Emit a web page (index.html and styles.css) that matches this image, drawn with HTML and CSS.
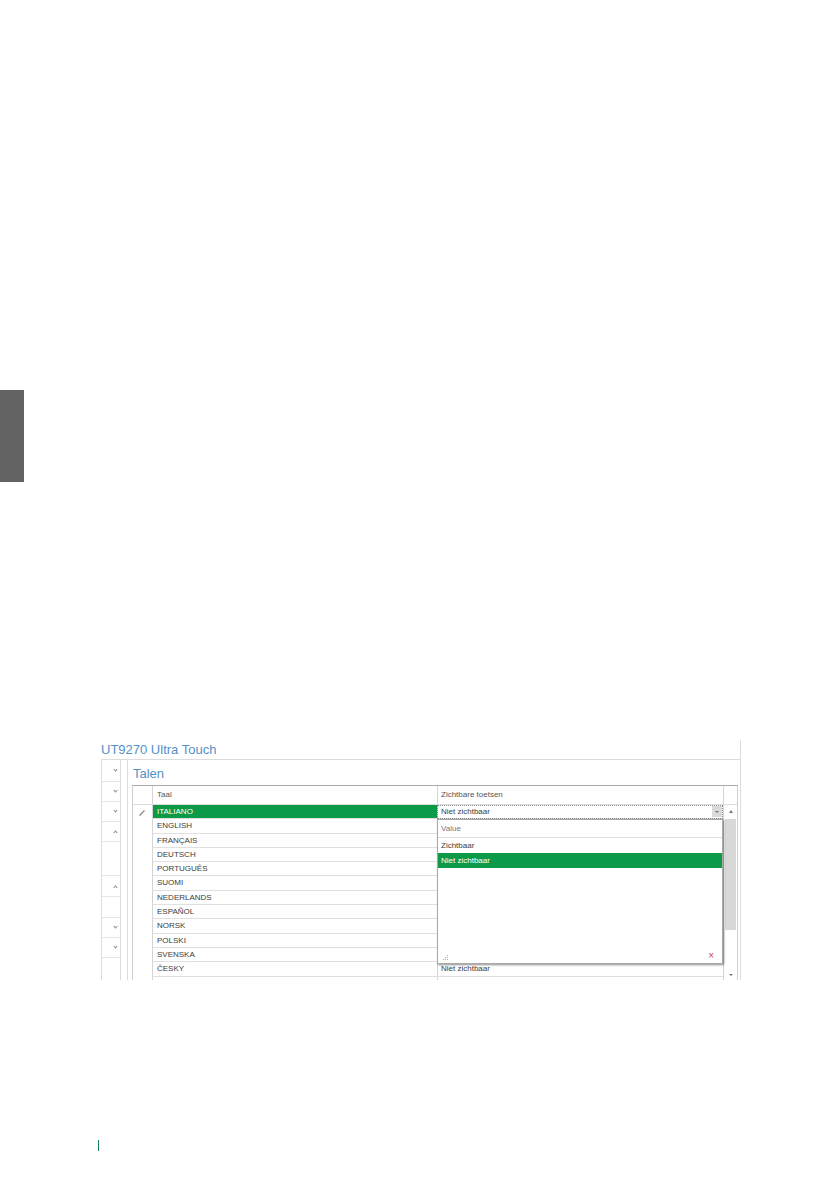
FILE: index.html
```html
<!DOCTYPE html>
<html>
<head>
    <title>UT9270 Ultra Touch - Talen</title>
    <link rel="stylesheet" href="styles.css">
</head>
<body>
<div class="page">
    <div class="side-tab"></div>

    <div class="shot">
        <div class="shot-title">UT9270 Ultra Touch</div>
        <div class="shot-body">
            <div class="nav">
                <div class="nav-item h22"><span class="chev down"></span></div>
                <div class="nav-item h20"><span class="chev down"></span></div>
                <div class="nav-item h20"><span class="chev down"></span></div>
                <div class="nav-item h20"><span class="chev up"></span></div>
                <div class="nav-item h34"></div>
                <div class="nav-item h21"><span class="chev up"></span></div>
                <div class="nav-item h21"></div>
                <div class="nav-item h20"><span class="chev down"></span></div>
                <div class="nav-item h20"><span class="chev down"></span></div>
            </div>
            <div class="nav-gap"></div>

            <div class="panel">
                <div class="panel-title">Talen</div>
                <div class="grid">
                    <div class="grid-head">
                        <div class="c-ind"></div>
                        <div class="c-name">Taal</div>
                        <div class="c-val">Zichtbare toetsen</div>
                        <div class="c-scroll"></div>
                    </div>
                    <div class="grid-main">
                        <div class="rows">
                            <div class="row">
                                <div class="c-ind">
                                    <svg width="7" height="7" viewBox="0 0 7 7"><path d="M1 6 L5.5 1.5" stroke="#8a8a8a" stroke-width="1.2"/><path d="M0.6 6.4 L1.6 6" stroke="#555" stroke-width="1"/></svg>
                                </div>
                                <div class="c-name sel">ITALIANO</div>
                                <div class="c-val editing">
                                    <span>Niet zichtbaar</span>
                                    <span class="dd-btn"><span class="tri-down"></span></span>
                                </div>
                            </div>
                            <!-- value cells below are covered by the open editor -->
                            <div class="row"><div class="c-ind"></div><div class="c-name">ENGLISH</div><div class="c-val"></div></div>
                            <div class="row"><div class="c-ind"></div><div class="c-name">FRANÇAIS</div><div class="c-val"></div></div>
                            <div class="row"><div class="c-ind"></div><div class="c-name">DEUTSCH</div><div class="c-val"></div></div>
                            <div class="row"><div class="c-ind"></div><div class="c-name">PORTUGUÊS</div><div class="c-val"></div></div>
                            <div class="row"><div class="c-ind"></div><div class="c-name">SUOMI</div><div class="c-val"></div></div>
                            <div class="row"><div class="c-ind"></div><div class="c-name">NEDERLANDS</div><div class="c-val"></div></div>
                            <div class="row"><div class="c-ind"></div><div class="c-name">ESPAÑOL</div><div class="c-val"></div></div>
                            <div class="row"><div class="c-ind"></div><div class="c-name">NORSK</div><div class="c-val"></div></div>
                            <div class="row"><div class="c-ind"></div><div class="c-name">POLSKI</div><div class="c-val"></div></div>
                            <div class="row"><div class="c-ind"></div><div class="c-name">SVENSKA</div><div class="c-val"></div></div>
                            <div class="row"><div class="c-ind"></div><div class="c-name">ČESKY</div><div class="c-val">Niet zichtbaar</div></div>
                            <div class="row"><div class="c-ind"></div><div class="c-name"></div><div class="c-val"></div></div>
                        </div>
                        <div class="scrollbar">
                            <div class="sb-btn"><span class="tri-up"></span></div>
                            <div class="sb-thumb"></div>
                            <div class="sb-track"></div>
                            <div class="sb-btn"><span class="tri-down"></span></div>
                        </div>

                        <!-- open editor dropdown -->
                        <div class="dropdown">
                            <div class="dd-head">Value</div>
                            <div class="dd-item">Zichtbaar</div>
                            <div class="dd-item sel">Niet zichtbaar</div>
                            <div class="dd-foot">
                                <svg width="7" height="7" viewBox="0 0 7 7" fill="#b0b0b0">
                                    <rect x="5" y="1" width="1" height="1"/>
                                    <rect x="3" y="3" width="1" height="1"/><rect x="5" y="3" width="1" height="1"/>
                                    <rect x="1" y="5" width="1" height="1"/><rect x="3" y="5" width="1" height="1"/><rect x="5" y="5" width="1" height="1"/>
                                </svg>
                                <span class="dd-close">×</span>
                            </div>
                        </div>
                    </div>
                </div>
            </div>
        </div>
    </div>

    <div class="page-mark"></div>
</div>
</body>
</html>
```

FILE: styles.css
```css
* {
    box-sizing: border-box;
}
body {
    margin: 0;
    background: #fff;
    font-family: "Liberation Sans", Arial, sans-serif;
}
.page {
    width: 839px;
    height: 1191px;
    overflow: hidden;
}
.side-tab {
    margin-top: 390px;
    width: 24px;
    height: 92px;
    background-color: #636363;
}
.page-mark {
    margin: 160px 0 0 98px;
    width: 1px;
    height: 11px;
    background-color: #127e5e;
}

/* screenshot */
.shot {
    margin: 258px 0 0 100px;
    width: 641px;
    height: 240px;
    padding-left: 1px;
    border-right: 1px solid #dcdcdc;
    overflow: hidden;
}
.shot-title {
    height: 20px;
    border-bottom: 1px solid #dcdcdc;
    font-size: 13px;
    line-height: 19px;
    color: #5590c6;
}
.shot-body {
    display: flex;
    height: 220px;
}
.nav {
    width: 20px;
    border-left: 1px solid #dcdcdc;
    border-right: 1px solid #dcdcdc;
}
.nav-item {
    display: flex;
    align-items: center;
    justify-content: flex-end;
    padding-right: 3px;
    border-bottom: 1px solid #e6e6e6;
}
.h20 { height: 20px; }
.h21 { height: 21px; }
.h22 { height: 22px; }
.h34 { height: 34px; }
.chev {
    width: 3px;
    height: 3px;
    border-right: 1px solid #8a8a8a;
    border-bottom: 1px solid #8a8a8a;
}
.chev.down {
    transform: translateY(-1px) rotate(45deg);
}
.chev.up {
    transform: translateY(1px) rotate(-135deg);
}
.nav-gap {
    width: 7px;
    border-right: 1px solid #dcdcdc;
}
.panel {
    flex: 1;
    padding-left: 4px;
}
.panel-title {
    height: 25px;
    padding: 5px 0 0 1px;
    font-size: 13px;
    line-height: 18px;
    color: #5590c6;
}

/* grid */
.grid {
    width: 606px;
    border: 1px solid #cfcfcf;
    border-top-color: #a9a9a9;
    font-size: 8px;
    color: #3c3c3c;
}
.grid-head {
    display: flex;
    height: 19px;
    line-height: 18px;
    border-bottom: 1px solid #dcdcdc;
    color: #555;
}
.c-ind {
    width: 19px;
    display: flex;
    align-items: center;
    justify-content: center;
}
.c-name {
    width: 285px;
    padding-left: 4px;
    border-left: 1px solid #d4d4d4;
}
.c-val {
    width: 286px;
    padding-left: 3px;
    border-left: 1px solid #d4d4d4;
}
.c-scroll {
    width: 14px;
    border-left: 1px solid #d4d4d4;
}
.grid-main {
    display: flex;
    position: relative;
}
.rows {
    width: 590px;
}
.row {
    display: flex;
    height: 14.3px;
    line-height: 13px;
}
.row .c-name,
.row .c-val {
    border-bottom: 1px solid #e0e0e0;
    white-space: nowrap;
}
.c-name.sel {
    background-color: #0d9a48;
    color: #fff;
}
.c-val.editing {
    display: flex;
    justify-content: space-between;
    outline: 1px dotted #8c8c8c;
    outline-offset: -1px;
}
.dd-btn {
    width: 10px;
    margin: 1px 1px 1px 0;
    background-color: #dadada;
    display: flex;
    align-items: center;
    justify-content: center;
}
.tri-down {
    border-left: 2px solid transparent;
    border-right: 2px solid transparent;
    border-top: 2px solid #777;
}
.tri-up {
    border-left: 2px solid transparent;
    border-right: 2px solid transparent;
    border-bottom: 3px solid #777;
}
.scrollbar {
    width: 14px;
    border-left: 1px solid #d4d4d4;
    display: flex;
    flex-direction: column;
}
.sb-btn {
    height: 13px;
    display: flex;
    align-items: center;
    justify-content: center;
}
.sb-thumb {
    height: 111px;
    margin: 1px 1px 0 1px;
    background-color: #d8d8d8;
}
.sb-track {
    height: 38px;
}

/* dropdown editor */
.dropdown {
    position: absolute;
    left: 304px;
    top: 14px;
    width: 286px;
    height: 145px;
    background: #fff;
    border: 1px solid #a8a8a8;
    box-shadow: 1px 1px 2px rgba(0, 0, 0, 0.45);
    display: flex;
    flex-direction: column;
}
.dd-head {
    height: 18px;
    line-height: 17px;
    padding-left: 3px;
    border-bottom: 1px solid #e0e0e0;
    color: #7a7a7a;
}
.dd-item {
    height: 15px;
    line-height: 15px;
    padding-left: 3px;
}
.dd-item.sel {
    background-color: #0d9a48;
    color: #fff;
}
.dd-foot {
    margin-top: auto;
    display: flex;
    justify-content: space-between;
    align-items: flex-end;
    padding: 0 8px 2px 4px;
}
.dd-close {
    font-size: 10px;
    line-height: 10px;
    color: #d0455a;
}
```
